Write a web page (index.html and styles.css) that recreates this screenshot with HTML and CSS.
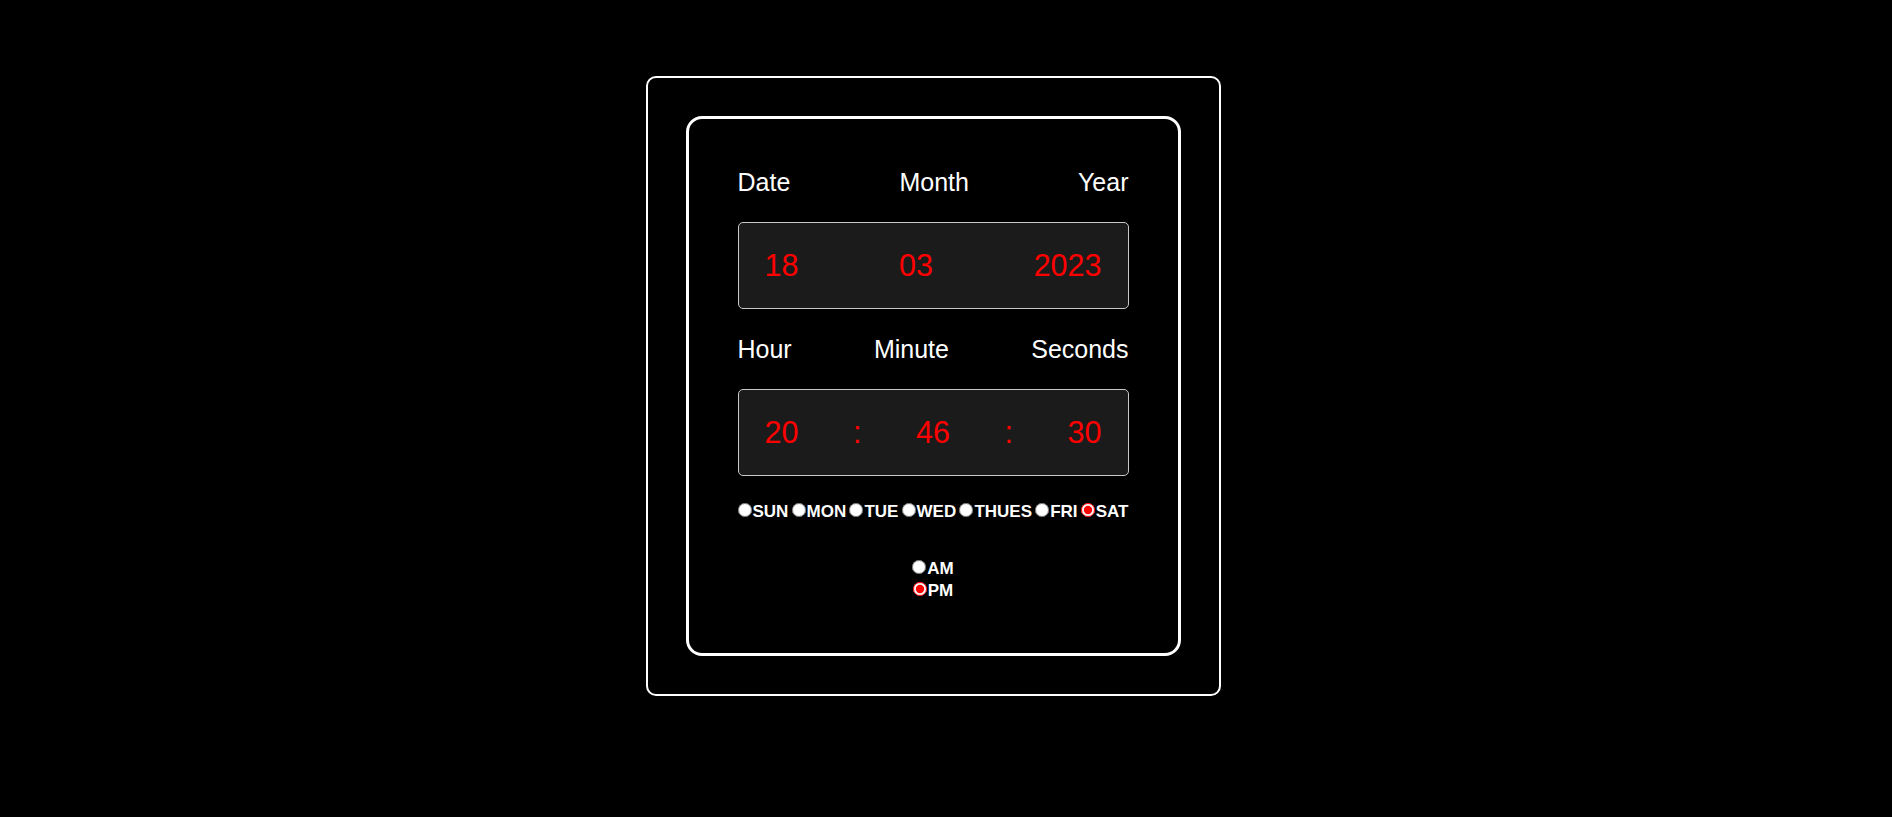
FILE: index.html
```html
<!DOCTYPE html>
<html lang="en">
<head>
<meta charset="utf-8">
<title>Digital Clock</title>
<link rel="stylesheet" href="styles.css">
</head>
<body>
<div class="page">
  <div class="outer">
    <div class="inner">
      <div class="labels">
        <span>Date</span>
        <span>Month</span>
        <span>Year</span>
      </div>
      <div class="display">
        <span>18</span>
        <span>03</span>
        <span>2023</span>
      </div>
      <div class="labels labels-time">
        <span>Hour</span>
        <span>Minute</span>
        <span>Seconds</span>
      </div>
      <div class="display">
        <span>20</span>
        <span class="colon">:</span>
        <span>46</span>
        <span class="colon">:</span>
        <span>30</span>
      </div>
      <div class="days">
        <label class="day"><input type="radio" name="day">SUN</label>
        <label class="day"><input type="radio" name="day">MON</label>
        <label class="day"><input type="radio" name="day">TUE</label>
        <label class="day"><input type="radio" name="day">WED</label>
        <label class="day"><input type="radio" name="day">THUES</label>
        <label class="day"><input type="radio" name="day">FRI</label>
        <label class="day"><input type="radio" name="day" checked>SAT</label>
      </div>
      <div class="meridiem">
        <label class="mer"><input type="radio" name="mer">AM</label>
        <label class="mer"><input type="radio" name="mer" checked>PM</label>
      </div>
    </div>
  </div>
</div>
</body>
</html>
```

FILE: styles.css
```css
* {
  box-sizing: border-box;
}

html, body {
  margin: 0;
  padding: 0;
  background: #000;
}

body {
  font-family: "Liberation Sans", Arial, sans-serif;
  color: #fff;
}

.page {
  display: flex;
  justify-content: center;
  align-items: flex-start;
  padding: 76px 26px 0 0;
  min-height: 817px;
}

.outer {
  width: 575px;
  padding: 38px;
  border: 2px solid #fff;
  border-radius: 10px;
}

.inner {
  width: 495px;
  padding: 49px 49px 51px 49px;
  border: 3px solid #fff;
  border-radius: 16px;
}

.labels {
  display: flex;
  justify-content: space-between;
  font-size: 25px;
  color: #fff;
}

.labels-time {
  margin-top: 26px;
}

.display {
  display: flex;
  justify-content: space-between;
  align-items: center;
  height: 87px;
  margin-top: 25px;
  padding: 0 26px;
  background: #1b1b1b;
  border: 1px solid #c8c8c8;
  border-radius: 5px;
  font-size: 30.5px;
  color: #ff0000;
}

.days {
  display: flex;
  justify-content: space-between;
  align-items: baseline;
  margin-top: 26px;
  font-size: 17px;
  font-weight: bold;
  line-height: 20px;
}

.day,
.mer {
  white-space: nowrap;
}

input[type="radio"] {
  width: 14px;
  height: 14px;
  margin: 0 1px 0 0;
  vertical-align: baseline;
  accent-color: #ff0000;
}

.meridiem {
  display: flex;
  flex-direction: column;
  align-items: center;
  margin-top: 36px;
  font-size: 17px;
  font-weight: bold;
  line-height: 22px;
}
```
